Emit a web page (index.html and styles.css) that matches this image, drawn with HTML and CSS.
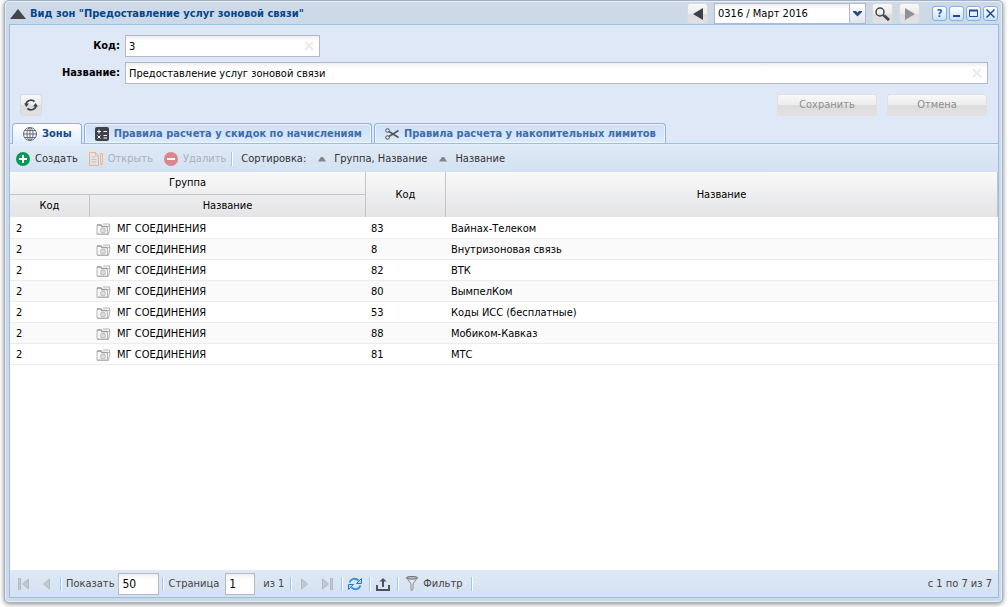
FILE: index.html
```
<!DOCTYPE html>
<html lang="ru">
<head>
    <meta charset="UTF-8">
    <meta name="viewport" content="width=device-width, initial-scale=1.0">
    <title>Вид зон</title>
    <link rel="stylesheet" href="styles.css">
</head>
<body>
    <svg class="sprite" aria-hidden="true">
        <symbol id="folder" viewBox="0 0 15 14">
            <path d="M1 12V3h4l1 1.500h5.500V12z" fill="#f6f6f6" stroke="#b4b4b6"/>
            <path d="M1 3h4l1 1.500h5.500" fill="none" stroke="#a0a0a3" stroke-width="1.500"/>
            <path d="M7 2h6.500v2.500M1 12.500h11.500l1.500-8h-2.500" fill="none" stroke="#b4b4b6"/>
            <circle cx="7" cy="8.500" r="2.500" fill="#dcdcdc" stroke="#bdbdbf"/>
        </symbol>
        <symbol id="clear" viewBox="0 0 10 10">
            <path d="M1 1l8 8M9 1L1 9" stroke="#ebebeb" stroke-width="2" fill="none"/>
        </symbol>
        <symbol id="sort" viewBox="0 0 8 5">
            <path d="M0 4.500L3 0h2l3 4.500z" fill="#858585"/>
        </symbol>
    </svg>

    <div class="window">
        <div class="window-header">
            <svg class="collapse" width="16" height="10" viewBox="0 0 16 10"><path d="M0 10L8 0l8 10z" fill="#42454f"/></svg>
            <h1>Вид зон "Предоставление услуг зоновой связи"</h1>
            <div class="period">
                <button class="btn btn-icon" type="button" aria-label="Предыдущий период"><svg width="10" height="12" viewBox="0 0 10 12"><path d="M10 0v12L0 6z" fill="#3d4049"/></svg></button>
                <div class="combo">
                    <select aria-label="Период">
                        <option>0316 / Март 2016</option>
                    </select>
                    <span class="combo-arrow"><svg width="9" height="6" viewBox="0 0 9 6"><path d="M0 0h3l1.500 1.500L6 0h3v1L4.500 5.500 0 1z" fill="#2c4a86"/></svg></span>
                </div>
                <button class="btn btn-icon" type="button" aria-label="Найти"><svg width="15" height="14" viewBox="0 0 15 14" fill="none" stroke="#42454f"><circle cx="5" cy="5" r="4" stroke-width="1.500"/><path d="M8 8l1 1" stroke-width="2"/><path d="M9 8.500l5 4.500" stroke-width="3"/></svg></button>
                <button class="btn btn-icon" type="button" aria-label="Следующий период" disabled><svg width="10" height="12" viewBox="0 0 10 12"><path d="M0 0v12l10-6z" fill="#8f9297"/></svg></button>
            </div>
            <div class="tools">
                <button type="button" aria-label="Справка">?</button>
                <button type="button" aria-label="Свернуть"><svg width="9" height="9" viewBox="0 0 9 9"><path d="M1 7h7" stroke="#2347a0" stroke-width="2"/></svg></button>
                <button type="button" aria-label="Развернуть"><svg width="9" height="9" viewBox="0 0 9 9"><path d="M.5 1.500h8v6h-8z" fill="none" stroke="#2347a0"/><path d="M0 1.500h9" stroke="#2347a0" stroke-width="2"/></svg></button>
                <button type="button" aria-label="Закрыть"><svg width="9" height="9" viewBox="0 0 9 9"><path d="M.5.5l8 8M8.500.5l-8 8" stroke="#2347a0" stroke-width="1.500"/></svg></button>
            </div>
        </div>

        <div class="window-body">
            <form class="card">
                <div class="form-row">
                    <label for="code">Код:</label>
                    <div class="field field-short">
                        <input type="text" id="code" name="code" value="3">
                        <svg width="10" height="10"><use href="#clear"/></svg>
                    </div>
                </div>
                <div class="form-row">
                    <label for="name">Название:</label>
                    <div class="field">
                        <input type="text" id="name" name="name" value="Предоставление услуг зоновой связи">
                        <svg width="10" height="10"><use href="#clear"/></svg>
                    </div>
                </div>
                <div class="form-actions">
                    <button class="btn btn-icon refresh" type="button" aria-label="Обновить"><svg width="14" height="12" viewBox="0 0 14 12"><path d="M2 5.500A5 4.500 0 0 1 10.500 2.500M12 6.500A5 4.500 0 0 1 3.500 9.500" fill="none" stroke="#42454f" stroke-width="1.800"/><path d="M0 4.500h5L2.500 8zM9 7.500h5L11.500 4z" fill="#42454f"/></svg></button>
                    <button class="btn btn-wide" type="submit" disabled>Сохранить</button>
                    <button class="btn btn-wide" type="button" disabled>Отмена</button>
                </div>
            </form>

            <div class="tabs" role="tablist">
                <button class="tab active" type="button" role="tab" aria-selected="true">
                    <svg width="14" height="14" viewBox="0 0 14 14" fill="none" stroke="#6a6d75"><circle cx="7" cy="7" r="6.500"/><ellipse cx="7" cy="7" rx="3" ry="6.500"/><path d="M7 0v14M0 7h14M1.500 3.500h11M1.500 10.500h11"/></svg>
                    Зоны
                </button>
                <button class="tab" type="button" role="tab">
                    <svg width="14" height="14" viewBox="0 0 14 14"><rect width="14" height="14" rx="2" fill="#3f424c"/><path d="M2 4.500h4M4 2.500v4M8.500 4.500h3.500M2.500 8.500l3 3M5.500 8.500l-3 3M8.500 8.500h3.500M8.500 11h3.500" stroke="#fff" fill="none"/></svg>
                    Правила расчета у скидок по начислениям
                </button>
                <button class="tab" type="button" role="tab">
                    <svg width="14" height="12" viewBox="0 0 14 12" fill="none" stroke="#50535c"><circle cx="2.500" cy="2.500" r="1.800"/><circle cx="2.500" cy="9.500" r="1.800"/><path d="M4 3.500l9.500 6M4 8.500l9.500-6" stroke-width="1.500"/></svg>
                    Правила расчета у накопительных лимитов
                </button>
            </div>

            <div class="toolbar">
                <button class="tool" type="button"><svg width="14" height="14" viewBox="0 0 14 14"><circle cx="7" cy="7" r="7" fill="#0b9756"/><path d="M3 7h8M7 3v8" stroke="#fff" stroke-width="2"/></svg>Создать</button>
                <button class="tool" type="button" disabled><svg width="14" height="14" viewBox="0 0 14 14" fill="none" stroke="#f0b787"><path d="M.5.5h6l3 3v10h-9z"/><path d="M6.500 1v3h3M2.500 5h3M2.500 7.500h5M2.500 10h5M11.500 1.500h2v9l-1 3-1-3z"/></svg>Открыть</button>
                <button class="tool" type="button" disabled><svg width="14" height="14" viewBox="0 0 14 14"><circle cx="7" cy="7" r="7" fill="#db858d"/><path d="M3 7h8" stroke="#fff" stroke-width="2"/></svg>Удалить</button>
                <span class="separator"></span>
                <span class="caption">Сортировка:</span>
                <button class="tool sorter" type="button"><svg width="8" height="5"><use href="#sort"/></svg>Группа, Название</button>
                <button class="tool sorter" type="button"><svg width="8" height="5"><use href="#sort"/></svg>Название</button>
            </div>

            <div class="grid">
                <table>
                    <colgroup>
                        <col class="col-code">
                        <col class="col-group">
                        <col class="col-code">
                        <col>
                    </colgroup>
                    <thead>
                        <tr>
                            <th colspan="2" class="group-head">Группа</th>
                            <th rowspan="2">Код</th>
                            <th rowspan="2">Название</th>
                        </tr>
                        <tr>
                            <th>Код</th>
                            <th>Название</th>
                        </tr>
                    </thead>
                    <tbody>
                        <tr><td>2</td><td><span class="group"><svg width="15" height="14"><use href="#folder"/></svg>МГ СОЕДИНЕНИЯ</span></td><td>83</td><td>Вайнах-Телеком</td></tr>
                        <tr><td>2</td><td><span class="group"><svg width="15" height="14"><use href="#folder"/></svg>МГ СОЕДИНЕНИЯ</span></td><td>8</td><td>Внутризоновая связь</td></tr>
                        <tr><td>2</td><td><span class="group"><svg width="15" height="14"><use href="#folder"/></svg>МГ СОЕДИНЕНИЯ</span></td><td>82</td><td>ВТК</td></tr>
                        <tr><td>2</td><td><span class="group"><svg width="15" height="14"><use href="#folder"/></svg>МГ СОЕДИНЕНИЯ</span></td><td>80</td><td>ВымпелКом</td></tr>
                        <tr><td>2</td><td><span class="group"><svg width="15" height="14"><use href="#folder"/></svg>МГ СОЕДИНЕНИЯ</span></td><td>53</td><td>Коды ИСС (бесплатные)</td></tr>
                        <tr><td>2</td><td><span class="group"><svg width="15" height="14"><use href="#folder"/></svg>МГ СОЕДИНЕНИЯ</span></td><td>88</td><td>Мобиком-Кавказ</td></tr>
                        <tr><td>2</td><td><span class="group"><svg width="15" height="14"><use href="#folder"/></svg>МГ СОЕДИНЕНИЯ</span></td><td>81</td><td>МТС</td></tr>
                    </tbody>
                </table>
            </div>

            <div class="paging">
                <button class="page-btn" type="button" aria-label="Первая страница" disabled><svg width="11" height="12" viewBox="0 0 11 12"><path d="M.5.5h2v11h-2zM10.500 1v10L4.500 6z" fill="#c3c8ce" stroke="#b3b9c0"/></svg></button>
                <button class="page-btn" type="button" aria-label="Предыдущая страница" disabled><svg width="7" height="12" viewBox="0 0 7 12"><path d="M6.500 1v10L.5 6z" fill="#c3c8ce" stroke="#b3b9c0"/></svg></button>
                <span class="separator"></span>
                <label for="pageSize">Показать</label>
                <input type="text" id="pageSize" class="page-size" value="50">
                <span class="separator"></span>
                <label for="page">Страница</label>
                <input type="text" id="page" class="page-number" value="1">
                <span class="page-total">из 1</span>
                <span class="separator"></span>
                <button class="page-btn" type="button" aria-label="Следующая страница" disabled><svg width="7" height="12" viewBox="0 0 7 12"><path d="M.5 1v10l6-5z" fill="#c3c8ce" stroke="#b3b9c0"/></svg></button>
                <button class="page-btn" type="button" aria-label="Последняя страница" disabled><svg width="11" height="12" viewBox="0 0 11 12"><path d="M8.500.5h2v11h-2zM.5 1v10l6-5z" fill="#c3c8ce" stroke="#b3b9c0"/></svg></button>
                <span class="separator"></span>
                <button class="page-btn" type="button" aria-label="Перезагрузить"><svg width="14" height="14" viewBox="0 0 14 14"><path d="M1.500 5.500C3 1.500 7 .5 10.500 3.500" fill="none" stroke="#3b8fdb" stroke-width="2"/><path d="M13.500 1.500v5h-5z" fill="#a5d5fb" stroke="#2a79c9"/><path d="M12.500 8.500C11 12.500 7 13.500 3.500 10.500" fill="none" stroke="#3b8fdb" stroke-width="2"/><path d="M.5 12.500v-5h5z" fill="#a5d5fb" stroke="#2a79c9"/></svg></button>
                <span class="separator"></span>
                <button class="page-btn" type="button" aria-label="Выгрузить"><svg width="14" height="14" viewBox="0 0 14 14"><path d="M1 8v5h12V8M7 10V3" fill="none" stroke="#50535c" stroke-width="2"/><path d="M3.500 4.500L7 1l3.500 3.500z" fill="#50535c"/></svg></button>
                <span class="separator"></span>
                <button class="tool filter" type="button"><svg width="12" height="15" viewBox="0 0 12 15"><path d="M.5 1.500L5 8v6.500l2-1V8l4.500-6.500z" fill="#e3e5e8" stroke="#8b8e94"/><ellipse cx="6" cy="1.800" rx="5.500" ry="1.300" fill="#bfc2c6" stroke="#6b6e74"/></svg>Фильтр</button>
                <span class="separator"></span>
                <span class="page-info">с 1 по 7 из 7</span>
            </div>
        </div>
    </div>
</body>
</html>
```
FILE: styles.css
```
* {
    box-sizing: border-box;
}
body {
    display: flex;
    height: 100vh;
    margin: 0;
    padding: 0 5px 4px 4px;
    background-color: #fff;
    font-family: "DejaVu Sans Condensed", "Noto Sans", sans-serif;
    font-size: 11px;
    line-height: 14px;
    color: #000;
}
button, input, select {
    margin: 0;
    font: inherit;
    color: inherit;
}
button {
    display: flex;
    align-items: center;
    justify-content: center;
    padding: 0;
    border: none;
    background: none;
    cursor: pointer;
}
button:disabled {
    cursor: default;
}
svg {
    display: block;
    flex: none;
}
.sprite {
    position: absolute;
    width: 0;
    height: 0;
}

/* window */
.window {
    flex: 1;
    display: flex;
    flex-direction: column;
    min-width: 0;
    padding: 0 3px 4px 4px;
    border: 1px solid #a2b1c5;
    border-radius: 5px;
    background-color: #ced9e7;
    box-shadow: inset 0 0 0 1px #e8eef6, 0 1px 5px #888;
}
.window-header {
    display: flex;
    align-items: center;
    height: 23px;
    padding: 2px 1px 0 0;
}
.collapse {
    margin: 0 4px 0 1px;
}
h1 {
    flex: 1;
    margin: 0;
    font-size: 11px;
    color: #04468c;
    white-space: nowrap;
}
.period {
    display: flex;
    gap: 6px;
    margin-right: 12px;
}
.btn {
    height: 22px;
    border: 1px solid #dadada;
    border-radius: 3px;
    background-image: linear-gradient(#f8f8f8, #ececec 50%, #dcdcdc 51%, #e2e2e2);
}
.btn-icon {
    width: 22px;
}
.period .btn {
    width: 21px;
    height: 21px;
}
.btn-wide {
    width: 100px;
    color: #8f8f8f;
    border-color: #e0e0e0;
}
.combo {
    position: relative;
    width: 152px;
    height: 21px;
}
.combo select {
    appearance: none;
    width: 100%;
    height: 100%;
    padding: 0 20px 0 3px;
    border: 1px solid #b5b8c8;
    border-radius: 0;
    background: linear-gradient(#eee, #fff 5px);
}
.combo-arrow {
    position: absolute;
    top: 0;
    right: 0;
    display: flex;
    align-items: center;
    justify-content: center;
    width: 17px;
    height: 21px;
    border: 1px solid #b5b8c8;
    background: linear-gradient(#fff, #dfe5ee);
    pointer-events: none;
}
.tools {
    display: flex;
    gap: 2px;
}
.tools button {
    width: 15px;
    height: 15px;
    border: 1px solid #86aee0;
    border-radius: 3px;
    background: linear-gradient(#fff, #c8e2f8);
    font-weight: bold;
    color: #2b5caa;
}
.window-body {
    flex: 1;
    display: flex;
    flex-direction: column;
    min-height: 0;
    border: 1px solid #99bce8;
    background-color: #dfe8f6;
}

/* form */
.card {
    display: flex;
    flex-direction: column;
    gap: 5px;
    padding: 10px 10px 7px;
}
.form-row {
    display: flex;
    align-items: center;
    gap: 5px;
}
.form-row label {
    width: 100px;
    font-weight: bold;
    text-align: right;
}
.field {
    flex: 1;
    display: flex;
    align-items: center;
    height: 22px;
    padding-right: 5px;
    border: 1px solid #b5b8c8;
    background: linear-gradient(#eee, #fff 5px);
}
.field-short {
    flex: none;
    width: 195px;
}
.field input {
    flex: 1;
    min-width: 0;
    padding: 1px 3px 0;
    border: none;
    background: none;
    outline: none;
}
.form-actions {
    display: flex;
    gap: 10px;
    padding: 5px 1px 0 0;
}
.refresh {
    margin-right: auto;
}

/* tabs */
.tabs {
    display: flex;
    gap: 2px;
    padding: 0 2px;
    border-bottom: 1px solid #99bce8;
}
.tab {
    gap: 5px;
    height: 20px;
    padding: 0 9px 0 10px;
    border: 1px solid #8db2e3;
    border-bottom: none;
    border-radius: 4px 4px 0 0;
    background: linear-gradient(#cfdff5, #dcebfd);
    box-shadow: inset 0 0 0 1px #eef5fe;
    font-weight: bold;
    color: #416da3;
    white-space: nowrap;
}
.tab.active {
    margin-bottom: -1px;
    height: 21px;
    background: linear-gradient(#fff, #deecfd);
    box-shadow: none;
    color: #15498b;
}

/* toolbar */
.toolbar, .paging {
    display: flex;
    align-items: center;
    color: #333;
    background: linear-gradient(#dfe9f5, #d3e1f1);
}
.toolbar {
    height: 28px;
    padding: 0 6px;
    border-top: 2px solid #deecfd;
}
.tool {
    gap: 5px;
    margin-right: 11px;
    white-space: nowrap;
}
.tool:disabled {
    color: #abb1b9;
}
.separator {
    width: 2px;
    height: 14px;
    margin-left: 3px;
    border-left: 1px solid #98c8ff;
    border-right: 1px solid #fff;
}
.toolbar .separator {
    margin: 0 8px 0 -6px;
}
.caption {
    margin-right: 12px;
}
.sorter {
    gap: 8px;
    margin-right: 12px;
}

/* grid */
.grid {
    flex: 1;
    min-height: 0;
    overflow: auto;
    background-color: #fff;
}
table {
    width: 100%;
    table-layout: fixed;
    border-collapse: separate;
    border-spacing: 0;
}
.col-code {
    width: 80px;
}
.col-group {
    width: 276px;
}
thead {
    background: linear-gradient(#f9f9f9, #e3e4e6);
}
th {
    height: 22px;
    padding: 0;
    border-right: 1px solid #c5c5c5;
    font-weight: normal;
}
.group-head {
    height: 23px;
    border-bottom: 1px solid #c5c5c5;
}
td {
    height: 21px;
    padding: 2px 5px 0 6px;
    border-bottom: 1px solid #ededed;
    white-space: nowrap;
}
td:nth-child(n+3) {
    padding-left: 5px;
}
tbody tr:first-child td {
    height: 22px;
}
tbody tr:nth-child(even) {
    background-color: #fafafa;
}
.group {
    display: flex;
    align-items: center;
    gap: 6px;
}

/* paging */
.paging {
    height: 27px;
    padding: 0 6px 0 1px;
    color: #444;
}
.paging label {
    margin: 0 4px;
}
.paging input {
    height: 22px;
    padding: 0 3px;
    border: 1px solid #b5b8c8;
    background: linear-gradient(#eee, #fff 5px);
    font-size: 12px;
    color: #000;
}
.paging .page-size {
    width: 41px;
}
.paging .page-number {
    width: 30px;
    margin-left: 2px;
}
.page-total {
    margin: 0 3px 0 8px;
}
.page-btn {
    width: 22px;
    height: 22px;
    margin-left: 1px;
}
.filter {
    margin: 0 5px 0 7px;
}
.page-info {
    margin-left: auto;
}
```
